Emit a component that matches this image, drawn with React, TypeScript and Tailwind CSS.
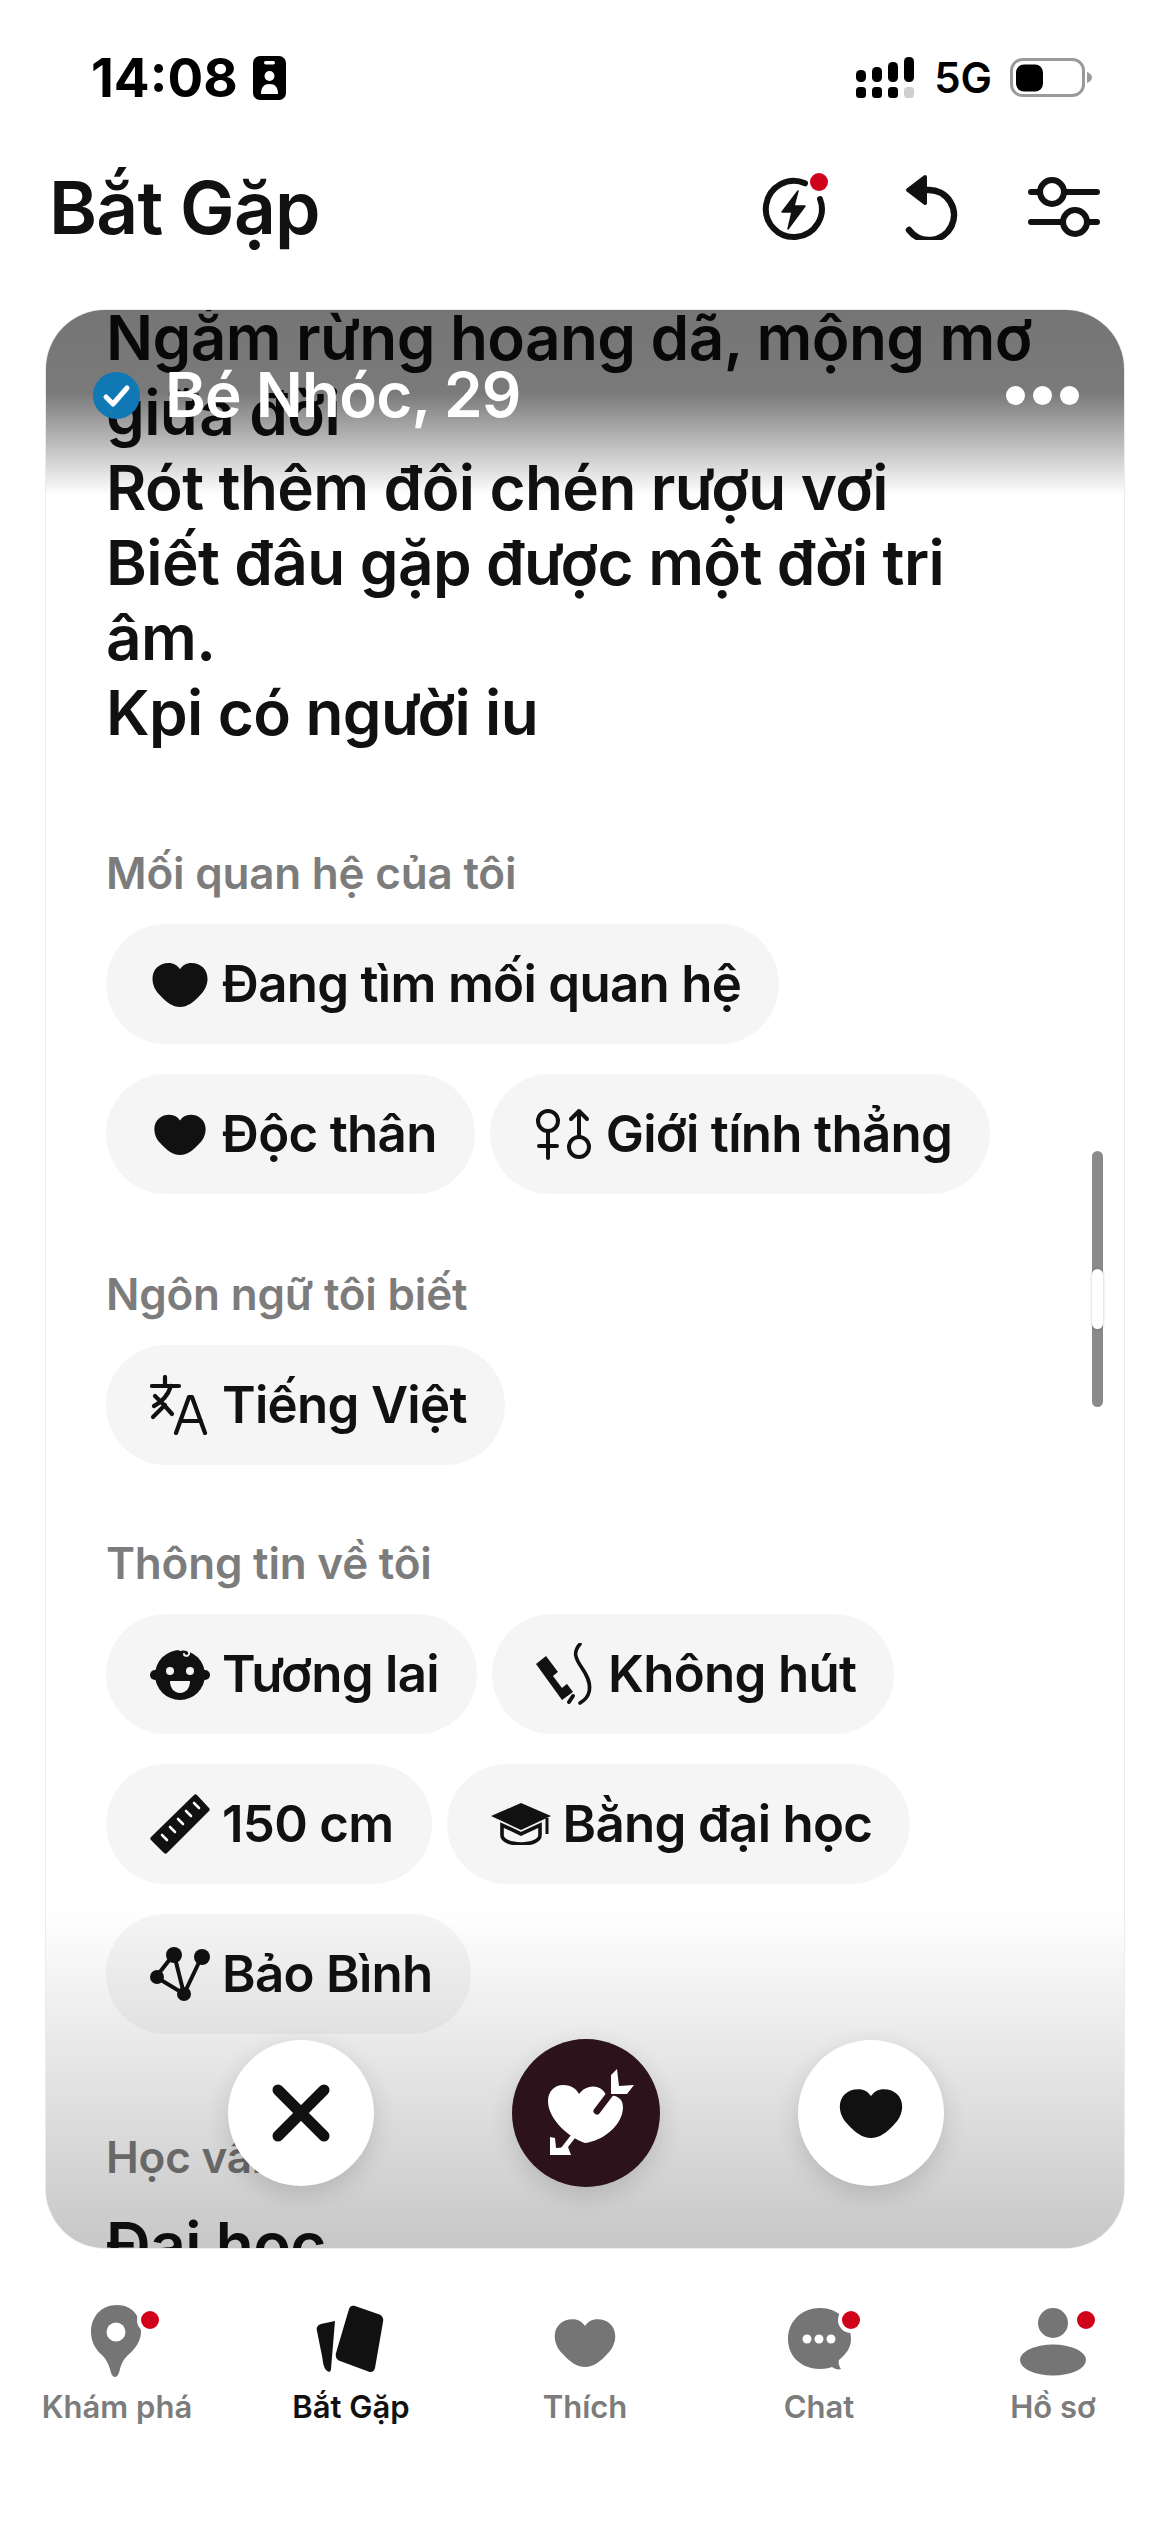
import React from "react";

const HEART = "M12 23.500C9 23.500 6.500 21 4 17.500 2 15 1 12 1 9 1 4.500 3.500 1 7.500 1 9.500 1 11 2.200 12 4.200 13 2.200 14.500 1 16.500 1 20.500 1 23 4.500 23 9c0 3-1 6-3 8.500-2.500 3.500-5 6-8 6z";

function Heart({ w, h, color = "#111111" }: { w: number; h: number; color?: string }) {
  return (
    <svg width={w} height={h} viewBox="0 0 24 24" preserveAspectRatio="none">
      <path d={HEART} fill={color} />
    </svg>
  );
}

function Gender() {
  return (
    <svg width="58" height="52" viewBox="0 0 58 52" fill="none" stroke="#111" strokeWidth="4" strokeLinecap="round" strokeLinejoin="round">
      <circle cx="13" cy="13" r="10" />
      <path d="M13 23v27M4 38h18" />
      <circle cx="44" cy="39" r="10" />
      <path d="M44 29V3M36 11l8-8 8 8" />
    </svg>
  );
}

function Translate() {
  return (
    <svg width="60" height="60" viewBox="0 0 60 60" fill="none" stroke="#111" strokeWidth="4.200" strokeLinecap="round" strokeLinejoin="round">
      <path d="M15 2v8M2 11h27M21 11c-3 9-9 16-17 20" />
      <path d="M5 21l9 9 8 9M3 42l12-12" />
      <path d="M26 58l13-36h3l13 36M31 46h20" />
    </svg>
  );
}

function Baby() {
  return (
    <svg width="60" height="52" viewBox="0 0 60 52">
      <circle cx="5" cy="27" r="5" fill="#111" />
      <circle cx="55" cy="27" r="5" fill="#111" />
      <ellipse cx="30" cy="27" rx="25" ry="25" fill="#111" />
      <path d="M30 2c5-2 10 0 9 4-1 3-5 2-5 0" fill="none" stroke="#f5f5f5" strokeWidth="2" strokeLinecap="round" />
      <circle cx="20" cy="23" r="4" fill="#f5f5f5" />
      <circle cx="40" cy="23" r="4" fill="#f5f5f5" />
      <path d="M20 33h20c0 7-4 12-10 12s-10-5-10-12z" fill="#f5f5f5" />
    </svg>
  );
}

function Cigarette() {
  return (
    <svg width="60" height="62" viewBox="0 0 60 62" fill="none">
      <path d="M0 21l10-8 27 36-11 8z" fill="#111" />
      <path d="M17 33l6-5 9 12-6 5z" fill="#f5f5f5" />
      <path d="M37 53l-4 6" stroke="#111" strokeWidth="4" strokeLinecap="round" />
      <path d="M44 1c-7 8-5 14 2 24 6 9 9 16 7 24-1 5-4 8-9 11" stroke="#111" strokeWidth="3.600" strokeLinecap="round" />
    </svg>
  );
}

function Ruler() {
  return (
    <svg width="60" height="60" viewBox="0 0 60 60">
      <path d="M44 1c1-1 2-1 3 0l12 13c1 1 1 2 0 3L17 59c-1 1-2 1-3 0L1 46c-1-1-1-2 0-3z" fill="#111" />
      <path d="M44 9l5 5M36 17l5 5M28 25l5 5M20 33l5 5M12 41l5 5" stroke="#f5f5f5" strokeWidth="2.600" strokeLinecap="round" />
    </svg>
  );
}

function Cap() {
  return (
    <svg width="60" height="42" viewBox="0 0 60 42">
      <path d="M30 0L60 13 30 27 0 13z" fill="#111" />
      <path d="M11 22v10c0 6 9 9 19 9s19-3 19-9V22L30 31z" fill="none" stroke="#111" strokeWidth="3.600" />
      <path d="M56 15v16" stroke="#111" strokeWidth="3" />
    </svg>
  );
}

function Star() {
  return (
    <svg width="60" height="54" viewBox="0 0 60 54" fill="none">
      <path d="M24 7L6 30l28 17L52 9M24 7l10 40" stroke="#111" strokeWidth="4" />
      <circle cx="24" cy="8" r="8" fill="#111" />
      <circle cx="52" cy="10" r="8" fill="#111" />
      <circle cx="7" cy="30" r="7" fill="#111" />
      <circle cx="34" cy="47" r="7" fill="#111" />
    </svg>
  );
}

function Pill({ icon, text }: { icon: React.ReactNode; text: string }) {
  return (
    <div className="flex h-[120px] items-center gap-[12px] rounded-[60px] bg-[#f5f5f5] pl-[44px] pr-[38px]">
      <div className="flex w-[60px] items-center justify-center">{icon}</div>
      <span className="whitespace-nowrap text-[51px] font-semibold leading-[60px] tracking-[-0.7px] text-[#111111]">{text}</span>
    </div>
  );
}

function Label({ text, className }: { text: string; className: string }) {
  return <div className={"text-[44px] font-semibold leading-[56px] tracking-[-0.2px] text-[#7c7c7c] " + className}>{text}</div>;
}

function Signal() {
  const cols = [
    [0, 13, 12],
    [16, 10, 15],
    [32, 5, 20],
    [48, 0, 25],
  ];
  return (
    <svg width="58" height="42" viewBox="0 0 58 42">
      {cols.map(([x, y, h], i) => (
        <g key={i}>
          <rect x={x} y={y} width="10" height={h} rx="4.500" fill="#000" />
          <rect x={x} y="30" width="10" height="11" rx="3.500" fill={i === 3 ? "#cfcfcf" : "#000"} />
        </g>
      ))}
    </svg>
  );
}

function Battery() {
  return (
    <svg width="83" height="40" viewBox="0 0 83 40">
      <rect x="1.500" y="1.500" width="72" height="36" rx="11" fill="#fff" stroke="#9a9a9a" strokeWidth="3" />
      <rect x="6" y="6.500" width="27" height="27" rx="8" fill="#000" />
      <path d="M77 14c3 1 5 3 5 5.500s-2 4.500-5 5.500z" fill="#9a9a9a" />
    </svg>
  );
}

function PersonBadge() {
  return (
    <svg width="33" height="44" viewBox="0 0 33 44">
      <rect width="33" height="44" rx="7" fill="#000" />
      <rect x="11" y="5" width="11" height="3.500" rx="1.700" fill="#fff" />
      <circle cx="16.500" cy="20" r="5" fill="#fff" />
      <path d="M8 38c0-7 3-10 8.500-10S25 31 25 38z" fill="#fff" />
    </svg>
  );
}

function Bolt() {
  return (
    <svg width="68" height="68" viewBox="0 0 68 68" className="block">
      <path d="M44 10.300A28 28 0 1 0 59 26" fill="none" stroke="#111" strokeWidth="6" strokeLinecap="round" />
      <path d="M37 18L21 39h10l-4 17 17-23H33z" fill="#111" stroke="#111" strokeWidth="1.500" strokeLinejoin="round" />
      <circle cx="58" cy="9" r="9" fill="#d0021b" />
    </svg>
  );
}

function Undo() {
  return (
    <svg width="54" height="66" viewBox="0 0 54 66" fill="none">
      <path d="M20 3L3 16l17 13z" fill="#111" stroke="#111" strokeWidth="4" strokeLinejoin="round" />
      <path d="M20 16h4a25 25 0 1 1-20 40" stroke="#111" strokeWidth="6.500" strokeLinecap="round" />
    </svg>
  );
}

function Sliders() {
  return (
    <svg width="72" height="60" viewBox="0 0 72 60" fill="none" stroke="#111" strokeWidth="6" strokeLinecap="round">
      <path d="M3 15h66M3 45h66" />
      <circle cx="24" cy="15" r="12" fill="#fff" />
      <circle cx="47" cy="45" r="12" fill="#fff" />
    </svg>
  );
}

function Dot() {
  return <circle cx="0" cy="0" r="9" fill="#d0021b" />;
}

function TabPin() {
  return (
    <svg width="90" height="72" viewBox="0 0 90 72" className="block">
      <path d="M27 0C12 0 1 11 1 27c0 9 4 17 11 23 4 4 6 8 8 14 1 4 2 8 5 8s4-4 5-8c2-7 4-10 8-14 7-6 13-14 13-23C51 11 42 0 27 0z" fill="#757575" />
      <circle cx="26" cy="27" r="9.500" fill="#fff" />
      <circle cx="60" cy="15" r="13" fill="#fff" />
      <g transform="translate(60 15)"><Dot /></g>
    </svg>
  );
}

function TabCards() {
  return (
    <svg width="70" height="72" viewBox="0 0 70 72" className="block">
      <path d="M20 14l-4 48c-.3 3-2 4-5 1-3-4-3-9-4-14L2 24c-1-4 1-6 4-7z" fill="#111" transform="translate(0 2)" />
      <path d="M34 4c1-3 3-4 6-3l23 8c4 1 6 4 5 8l-8 46c-1 4-4 5-8 3L25 56c-3-1-5-4-4-8z" fill="#111" />
    </svg>
  );
}

function TabChat() {
  return (
    <svg width="90" height="64" viewBox="0 0 90 64" className="block">
      <path d="M32 0C14 0 0 13 0 31s14 30 32 30c5 0 9-1 12-2 3 2 6 3 9 2-2-3-3-6-2-9 7-6 12-12 12-21C63 13 50 0 32 0z" fill="#757575" />
      <circle cx="19" cy="31" r="4.500" fill="#fff" />
      <circle cx="31" cy="31" r="4.500" fill="#fff" />
      <circle cx="43" cy="31" r="4.500" fill="#fff" />
      <circle cx="63" cy="12" r="13" fill="#fff" />
      <g transform="translate(63 12)"><Dot /></g>
    </svg>
  );
}

function TabProfile() {
  return (
    <svg width="90" height="68" viewBox="0 0 90 68" className="block">
      <circle cx="33" cy="15" r="15" fill="#757575" />
      <ellipse cx="33" cy="52" rx="33" ry="15.500" fill="#757575" />
      <g transform="translate(66 12)"><Dot /></g>
    </svg>
  );
}

function Tab({ icon, label, active }: { icon: React.ReactNode; label: string; active?: boolean }) {
  return (
    <div className="flex w-[234px] flex-col items-center">
      <div className="flex h-[72px] w-[72px] items-start justify-start overflow-visible">{icon}</div>
      <span className={"mt-[11px] whitespace-nowrap text-[31px] font-semibold leading-[38px] " + (active ? "text-[#111111]" : "text-[#7c7c7c]")}>{label}</span>
    </div>
  );
}

function SuperLike() {
  return (
    <svg width="146" height="148" viewBox="0 0 146 148">
      <path d="M72 104C55 98 35 80 35 62c0-10 7-16 15-16 7 0 13 3 16 9 4-6 12-9 18-7 7 2 9 8 9 8 5 0 17 0 17 12 0 18-20 34-38 36z" fill="#fff" />
      <path d="M106 43L84 72" stroke="#2b121b" strokeWidth="7" strokeLinecap="round" />
      <path d="M98 36l6-6 2 17 15-1-7 9H98z" fill="#fff" strokeLinejoin="round" />
      <path d="M62 95l-14 18" stroke="#fff" strokeWidth="5" />
      <path d="M37 98l5 1 1 10 12-1 3 8H37z" fill="#fff" />
    </svg>
  );
}

export default function App() {
  return (
    <div className="flex h-[2532px] w-[1170px] flex-col overflow-hidden bg-white font-['Inter',sans-serif] text-[#111111]">
      <div className="flex h-[156px] shrink-0 items-center justify-between pl-[91px] pr-[77px]">
        <div className="flex items-center gap-[15px]">
          <span className="text-[53px] font-bold leading-none text-black">14:08</span>
          <PersonBadge />
        </div>
        <div className="flex items-center">
          <Signal />
          <span className="ml-[20px] mr-[18px] text-[42px] font-semibold leading-none text-black">5G</span>
          <Battery />
        </div>
      </div>

      <div className="mb-[51px] flex h-[102px] shrink-0 items-center justify-between pl-[49px] pr-[70px]">
        <span className="text-[73px] font-semibold leading-none tracking-[-0.8px]">Bắt Gặp</span>
        <div className="flex items-center">
          <Bolt />
          <div className="ml-[76px]"><Undo /></div>
          <div className="ml-[69px]"><Sliders /></div>
        </div>
      </div>

      <div className="relative ml-[45px] h-[1940px] w-[1080px] shrink-0 overflow-hidden rounded-[60px] border border-[#ececec] bg-white">
        <div className="-mt-[10px] pl-[60px] pr-[60px]">
          <div className="text-[62px] font-semibold leading-[75px] tracking-[-0.6px]">
            Ngắm rừng hoang dã, mộng mơ
            <br />
            giữa đời
            <br />
            Rót thêm đôi chén rượu vơi
            <br />
            Biết đâu gặp được một đời tri
            <br />
            âm.
            <br />
            Kpi có người iu
          </div>

          <Label text="Mối quan hệ của tôi" className="mt-[95px]" />
          <div className="mt-[23px] flex flex-wrap gap-x-[15px] gap-y-[30px]">
            <Pill icon={<Heart w={61} h={47} />} text="Đang tìm mối quan hệ" />
            <Pill icon={<Heart w={56} h={43} />} text="Độc thân" />
            <Pill icon={<Gender />} text="Giới tính thẳng" />
          </div>

          <Label text="Ngôn ngữ tôi biết" className="mt-[72px]" />
          <div className="mt-[23px] flex flex-wrap gap-x-[15px] gap-y-[30px]">
            <Pill icon={<Translate />} text="Tiếng Việt" />
          </div>

          <Label text="Thông tin về tôi" className="mt-[70px]" />
          <div className="mt-[23px] flex flex-wrap gap-x-[15px] gap-y-[30px] pr-[100px]">
            <Pill icon={<Baby />} text="Tương lai" />
            <Pill icon={<Cigarette />} text="Không hút" />
            <Pill icon={<Ruler />} text="150 cm" />
            <Pill icon={<Cap />} text="Bằng đại học" />
            <Pill icon={<Star />} text="Bảo Bình" />
          </div>

          <Label text="Học vấn" className="mt-[95px]" />
          <div className="mt-[22px] text-[62px] font-semibold leading-[75px] tracking-[-0.6px]">Đại học</div>
        </div>

        <div className="absolute inset-x-0 top-0 h-[185px] bg-[linear-gradient(to_bottom,rgba(0,0,0,0.54)_0%,rgba(0,0,0,0.52)_45%,rgba(0,0,0,0)_100%)]" />
        <div className="absolute inset-x-0 bottom-0 h-[340px] bg-[linear-gradient(to_bottom,rgba(0,0,0,0)_0%,rgba(0,0,0,0.22)_100%)]" />

        <div className="absolute left-[47px] right-[45px] top-[61px] flex items-center justify-between">
          <div className="flex items-center gap-[25px]">
            <svg width="47" height="47" viewBox="0 0 47 47">
              <circle cx="23.500" cy="23.500" r="23.500" fill="#0f78b5" />
              <path d="M13 25l7 7 14-16" fill="none" stroke="#fff" strokeWidth="5" strokeLinecap="round" strokeLinejoin="round" />
            </svg>
            <span className="text-[62px] font-semibold leading-[48px] tracking-[-0.8px] text-white">Bé Nhóc, 29</span>
          </div>
          <div className="flex gap-[8px]">
            <div className="h-[19px] w-[19px] rounded-full bg-white" />
            <div className="h-[19px] w-[19px] rounded-full bg-white" />
            <div className="h-[19px] w-[19px] rounded-full bg-white" />
          </div>
        </div>

        <div className="absolute right-[21px] top-[841px] h-[256px] w-[11px] rounded-full bg-[#8a8a8a]">
          <div className="mt-[118px] h-[60px] w-[11px] rounded-full bg-white shadow-[0_0_3px_rgba(0,0,0,0.25)]" />
        </div>

        <div className="absolute left-[182px] top-[1729px] flex items-center">
          <div className="flex h-[146px] w-[146px] items-center justify-center rounded-full bg-white shadow-[0_8px_24px_rgba(0,0,0,0.14)]">
            <svg width="60" height="60" viewBox="0 0 60 60" fill="none" stroke="#111" strokeWidth="11" strokeLinecap="round">
              <path d="M7 7l46 46M53 7L7 53" />
            </svg>
          </div>
          <div className="ml-[138px] flex h-[148px] w-[148px] items-center justify-center rounded-full bg-[#2b121b] shadow-[0_8px_24px_rgba(0,0,0,0.14)]">
            <SuperLike />
          </div>
          <div className="ml-[138px] flex h-[146px] w-[146px] items-center justify-center rounded-full bg-white shadow-[0_8px_24px_rgba(0,0,0,0.14)]">
            <Heart w={68} h={52} />
          </div>
        </div>
      </div>

      <div className="mt-[56px] flex">
        <Tab icon={<div className="ml-[9px]"><TabPin /></div>} label="Khám phá" />
        <Tab icon={<TabCards />} label="Bắt Gặp" active />
        <Tab icon={<div className="ml-[3px] mt-[12px]"><Heart w={66} h={51} color="#757575" /></div>} label="Thích" />
        <Tab icon={<div className="ml-[5px] mt-[3px]"><TabChat /></div>} label="Chat" />
        <Tab icon={<div className="ml-[3px] mt-[3px]"><TabProfile /></div>} label="Hồ sơ" />
      </div>
    </div>
  );
}
